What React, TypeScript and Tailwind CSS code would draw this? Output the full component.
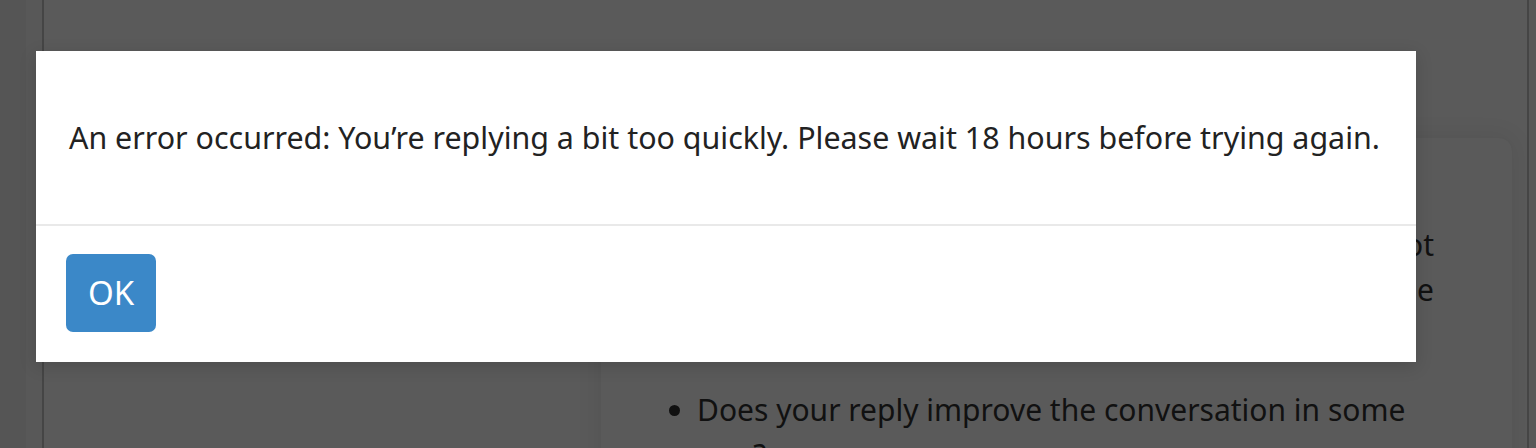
export default function App() {
    return (
        <div className="relative h-[448px] w-[1536px] overflow-hidden bg-[#5a5a5a] font-['Noto_Sans',sans-serif]">
            {/* page behind the overlay */}
            <div className="flex h-full">
                <div className="w-[26px] shrink-0 bg-[#555555]" />
                <div className="w-[16px] shrink-0 bg-[#585858]" />
                <div className="w-[2px] shrink-0 bg-[#454545]" />
                <main className="flex-1 pl-[556px] pr-[14px] pt-[137px]">
                    <section className="h-[400px] rounded-[14px] border border-[#565656] bg-[#5a5a5a] pl-[40px] pr-[78px] pt-[84px] text-[30px] leading-[45px] text-[#111111] shadow-[0_0_24px_rgba(0,0,0,0.08)]">
                        <p className="whitespace-nowrap text-right">Take a moment to check that this has not</p>
                        <p className="whitespace-nowrap text-right">already been said, and that you are the</p>
                        <p className="whitespace-nowrap">right person to answer.</p>
                        <ul className="mt-[30px] list-disc pl-[56px]">
                            <li>
                                Does your reply improve the conversation in some
                                <br />
                                way?
                            </li>
                        </ul>
                    </section>
                </main>
                <div className="w-[2px] shrink-0 bg-[#454545]" />
                <div className="w-[7px] shrink-0 bg-[#585858]" />
            </div>

            {/* dialog */}
            <div className="absolute left-[36px] top-[51px] w-[1380px] bg-white shadow-[0_4px_16px_rgba(0,0,0,0.15)]">
                <div className="flex h-[173px] items-center px-[33px] text-[30.4px] text-[#222222]">
                    <p className="whitespace-nowrap">
                        An error occurred: You’re replying a bit too quickly. Please wait 18 hours before trying again.
                    </p>
                </div>
                <div className="h-[2px] bg-[#e9e9e9]" />
                <div className="px-[30px] pb-[30px] pt-[28px]">
                    <button className="flex h-[78px] w-[90px] items-center justify-center rounded-[7px] bg-[#3b88c8] text-[33px] text-white">
                        OK
                    </button>
                </div>
            </div>
        </div>
    );
}
